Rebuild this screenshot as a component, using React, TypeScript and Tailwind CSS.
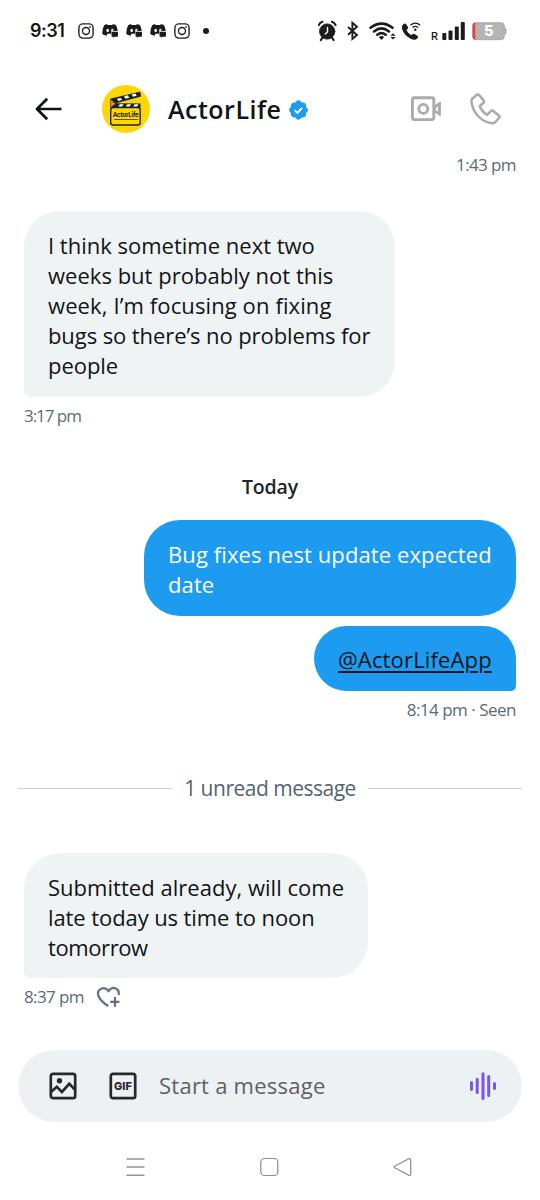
import type { ReactNode } from "react";

function Line({ children, className = "" }: { children: ReactNode; className?: string }) {
  return <span className={`block whitespace-nowrap ${className}`}>{children}</span>;
}

function Instagram() {
  return (
    <svg className="h-4 w-4 shrink-0" viewBox="0 0 16 16" fill="none" stroke="#222" strokeWidth="1.4">
      <rect x="0.9" y="0.9" width="14.2" height="14.2" rx="4" />
      <circle cx="8" cy="8" r="3.5" />
      <circle cx="12" cy="4" r="0.5" fill="#222" strokeWidth="0.8" />
    </svg>
  );
}

function Discord() {
  return (
    <svg className="h-4 w-4 shrink-0" viewBox="0 0 16 16" fill="#1c1c1c">
      <path d="M5 1.2 6 2.1Q8 1.7 10 2.1L11 1.2Q13 1.4 14 2.2 15.5 5 15.7 8H9.2V10.7H5.5L4.6 12.8Q2 12.3.2 11 0 6 2.2 2.2 3.2 1.4 5 1.2Z" />
      <ellipse cx="5.7" cy="7.4" rx="1.3" ry="1.6" fill="#fff" />
      <path d="M9 7.8Q9 5.5 10.5 5.7 12 6 11.6 7.8Z" fill="#fff" />
      <path d="M10.4 8.8h4.7q.9 0 .9.9v3.2q0 .9-.9.9h-2.4l-1.5 1v-1h-.8q-.9 0-.9-.9V9.7q0-.9.9-.9Z" />
    </svg>
  );
}

function StatusBar() {
  return (
    <div className="flex h-[62px] items-center pl-[30px]">
      <span className="w-[36px] whitespace-nowrap font-[Inter] text-[18px] leading-6 font-semibold tracking-[-0.45px] text-[#171717]">9:31</span>
      <div className="ml-3 flex items-center gap-2">
        <Instagram />
        <Discord />
        <Discord />
        <Discord />
        <Instagram />
      </div>
      <span className="ml-[13px] h-[6px] w-[6px] rounded-full bg-[#1c1c1c]" />
      <svg className="ml-auto h-6 w-[190px]" viewBox="0 0 190 24" fill="none">
        <g stroke="#1c1c1c" strokeLinecap="round">
          <circle cx="9.2" cy="12.5" r="7.6" fill="#1c1c1c" />
          <path d="M.8 6.100Q1.800 3.500 4.500 2.700M13.900 2.700Q16.600 3.500 17.600 6.100" strokeWidth="2" />
          <path d="m4.200 19-1.300 2M14.200 19l1.300 2" strokeWidth="2.200" />
          <path d="M9.500 8.500v4.500L7.200 15" stroke="#fff" strokeWidth="1.400" />
          <path d="m30 8 9 8-4.600 4V3.800l4.600 4-9 8" strokeWidth="1.900" strokeLinecap="butt" />
          <path d="M52.500 8.800Q63.500 .4 74.500 8.800M56 12.400Q63.500 6.400 71 12.400M59.300 15.700Q63.500 12.500 67.700 15.700" strokeWidth="2.500" />
        </g>
        <g fill="#1c1c1c">
          <path d="m60.800 18q2.700-1.800 5.400 0L63.500 21ZM75 14.200l2.600 2.600h-5.200ZM72.400 18H77.600L75 20.600Z" />
          <path d="M85.500 5.100Q87 3.800 88.100 5.200l1.900 2.900q.6 1.300-.6 2.100l-1 .9q1.500 3.300 4.900 5.100l1-1q1.100-.9 2.300-.1l3 2q1.100.9 0 2.100-2.600 2.700-6.500.8-7.300-3.500-9.200-10.400-.5-3 1.600-4.500Z" />
          <circle cx="97.300" cy="10.700" r="1.200" />
          <rect x="124.300" y="14" width="4" height="7" rx="1" />
          <rect x="130.500" y="11.500" width="4" height="9.500" rx="1" />
          <rect x="136.800" y="7.500" width="4" height="13.500" rx="1" />
          <rect x="142.800" y="3" width="4" height="18" rx="1" />
        </g>
        <path d="M92.400 6.200Q97.300 2.100 102.200 6.200M94.500 8.500Q97.300 6.200 100.100 8.500" stroke="#1c1c1c" strokeWidth="1.300" />
        <text x="113" y="21" fill="#1c1c1c" fontFamily="Roboto" fontSize="11" fontWeight="500">R</text>
        <path d="M158 3.700h25q3 0 3.300 3v1.600l1.700 1.800v4.400l-1.700 1.700v1.500q-.3 3-3.300 3h-25q-3.200 0-3.200-3.200V6.900q0-3.200 3.200-3.200Z" fill="#b5b5b5" stroke="#9b9b9b" strokeWidth="0.700" />
        <path d="M157.300 3.600v17.200q-2.800-.4-2.800-3.300V6.900q0-2.900 2.800-3.300Z" fill="#df4545" />
        <text x="170.700" y="17.300" textAnchor="middle" fill="#fff" fontFamily="Inter" fontSize="14.500" fontWeight="800">5</text>
      </svg>
      <span className="w-[32px]" />
    </div>
  );
}

function Avatar() {
  return (
    <svg className="h-12 w-12" viewBox="0 0 48 48">
      <circle cx="24" cy="24" r="24" fill="#fcd705" />
      <rect x="8.700" y="22.500" width="29.500" height="17.500" rx="2.500" fill="none" stroke="#25251c" strokeWidth="1.400" />
      <path d="M8.200 13.700 37.200 6.800q1 0 1.200 1l.8 3.600L14 18.300l24.500.1v4.400H8.200Z" fill="#1b252c" />
      <path d="m8.500 14.500 4.900 4.200-4.700 3.600Z" fill="#e88825" />
      <path d="m15 13.800 3.700-.9 1.300 2.200-3.700 1ZM22 11.200l3.800-.9 1.500 2.400-3.600 1ZM29.700 9.400l3.600-.9 1.400 2.300-3.600 1ZM16.300 21.500l1.500-2.200h3.800l-1.500 2.200ZM23.800 21.500l1.500-2.200h3.800l-1.500 2.200ZM31.200 21.500l1.500-2.200h3.800L35 21.500Z" fill="#fff" />
      <text x="23.800" y="31.500" textAnchor="middle" textLength="26" fontFamily="Inter" fontSize="6.300" fontWeight="700" fill="#26241a">ActorLife</text>
      <path d="M12 34.500h24" stroke="#5e5415" strokeWidth="1" />
    </svg>
  );
}

function Header() {
  return (
    <header className="flex h-[94px] items-center pl-[35px] pr-[38px]">
      <svg className="h-7 w-7" viewBox="0 0 28 28" fill="none" stroke="#0f1419" strokeWidth="2.700" strokeLinejoin="round">
        <path d="M26.500 14H2.200M12.200 3.700 2 14l10.200 10.300" />
      </svg>
      <div className="ml-[39px]"><Avatar /></div>
      <h1 className="ml-[18px] w-[114px] whitespace-nowrap text-[25px] leading-8 font-semibold tracking-[0.5px] text-[#0f1419]">ActorLife</h1>
      <svg className="ml-[5px] h-[22px] w-[22px] translate-y-px" viewBox="0 0 22 22" fill="#1d9bf0">
        <path d="M20.900 11c0-1.200-.8-2.400-2-3 .5-1.300.2-2.600-.6-3.600-.9-.9-2.300-1.200-3.600-.8C14.100 2.400 13 1.300 11.500 1.300S8.900 2.400 8.300 3.600C7 3.200 5.700 3.500 4.800 4.400c-.9 1-1.200 2.300-.7 3.600-1.200.6-2 1.800-2 3s.8 2.400 2 3c-.5 1.300-.2 2.600.7 3.600.9.900 2.200 1.200 3.500.8.600 1.200 1.700 2.300 3.200 2.300s2.600-1.100 3.200-2.300c1.300.4 2.600.1 3.600-.8.800-1 1.100-2.300.6-3.600 1.200-.6 2-1.800 2-3Z" />
        <path d="m7.700 11.200 2.700 2.700 4.700-5.100" fill="none" stroke="white" strokeWidth="1.800" />
      </svg>
      <div className="ml-auto flex items-center gap-[28px]">
        <svg className="h-8 w-8" viewBox="0 0 32 32" fill="none" stroke="#ababab" strokeWidth="2.900">
          <rect x="2.400" y="4.800" width="21.400" height="21.800" rx="2" />
          <circle cx="13.300" cy="15.900" r="4.500" />
          <path d="m23.800 13.900 6.400-4.600v13.200l-6.400-4.600Z" fill="#ababab" stroke="#ababab" strokeWidth="1.400" strokeLinejoin="round" />
          <path d="m26 14.800 2-1.300v5l-2-1.300Z" fill="#fff" stroke="none" />
        </svg>
        <svg className="h-8 w-8" viewBox="0 0 32 32" fill="none" stroke="#ababab" strokeWidth="2.600" strokeLinejoin="round">
          <path d="M6.200 2.300Q7.900.8 9.500 2.400l4.200 5.200q.9 1.400-.4 2.500L9.800 13q1.900 5.600 7.300 8.800l3.700-3.700q1.100-1.100 2.500-.2l5.500 4.500q1.300 1.200.2 2.600l-3.600 4q-1.200 1.500-3.500 1.200Q13.800 29.400 7.600 22.500 2.500 16.800 1.500 8.900 1.400 6.700 2.500 5.400Z" />
        </svg>
      </div>
    </header>
  );
}

export default function App() {
  return (
    <div className="flex h-[1200px] w-[540px] flex-col overflow-hidden bg-white font-['Open_Sans',sans-serif] text-[#0f1419]">
      <StatusBar />
      <Header />
      <main className="flex h-[894px] flex-col px-6">
        <time className="h-[20px] self-end whitespace-nowrap text-[17px] leading-[18px] tracking-[-0.6px] text-[#5b6b78]">1:43 pm</time>

        <div className="mt-[35px] h-[186px] w-[371px] rounded-[36px] rounded-bl-[6px] bg-[#eff3f4] px-6 pt-[19px] text-[22px] leading-[30px]">
          <Line>I think sometime next two</Line>
          <Line className="tracking-[0.02px]">weeks but probably not this</Line>
          <Line className="tracking-[0.11px]">week, I’m focusing on fixing</Line>
          <Line className="tracking-[-0.09px]">bugs so there’s no problems for</Line>
          <Line className="tracking-[-0.05px]">people</Line>
        </div>
        <time className="mt-[9px] h-[20px] whitespace-nowrap text-[17px] leading-[19px] tracking-[-1.05px] text-[#5b6b78]">3:17 pm</time>

        <div className="mt-[48px] h-[26px] whitespace-nowrap text-center text-[19.5px] leading-[26px] font-semibold tracking-[-0.15px] text-[#20252a]">Today</div>

        <div className="mt-5 h-24 w-[372px] self-end rounded-[36px] bg-[#1d9bf0] px-6 pt-[19px] text-[22px] leading-[30px] text-white">
          <Line className="tracking-[0.1px]">Bug fixes nest update expected</Line>
          <Line className="tracking-[0.1px]">date</Line>
        </div>
        <div className="mt-[10px] h-[65px] w-[202px] self-end rounded-[36px] rounded-br-[6px] bg-[#1d9bf0] px-6 pt-[18px] text-[22px] leading-[30px]">
          <Line className="tracking-[0.15px] underline decoration-[1.5px] underline-offset-[3px]">@ActorLifeApp</Line>
        </div>
        <div className="mt-[9px] h-5 self-end whitespace-nowrap text-[17px] leading-5 tracking-[-0.5px] text-[#5b6b78]">8:14 pm · Seen</div>

        <div className="-mx-[6px] mt-[53px] flex h-[30px] items-center gap-3">
          <span className="h-px flex-1 bg-[#cbd1d6]" />
          <span className="w-[172px] whitespace-nowrap text-center text-[21px] leading-[30px] tracking-[-0.5px] text-[#536471]">1 unread message</span>
          <span className="h-px flex-1 bg-[#cbd1d6]" />
        </div>

        <div className="mt-[50px] h-[125px] w-[344px] rounded-[36px] rounded-bl-[6px] bg-[#eff3f4] px-6 pt-[19px] text-[22px] leading-[30px]">
          <Line className="tracking-[0.03px]">Submitted already, will come</Line>
          <Line className="tracking-[-0.09px]">late today us time to noon</Line>
          <Line className="tracking-[-0.4px]">tomorrow</Line>
        </div>
        <div className="mt-[7px] flex h-6 items-center">
          <time className="w-[60px] whitespace-nowrap text-[17px] leading-5 tracking-[-0.6px] text-[#5b6b78]">8:37 pm</time>
          <svg className="ml-3 h-6 w-6" viewBox="0 0 24 24" fill="none" stroke="#607282" strokeWidth="2.200">
            <path d="M12.300 21Q4.500 16.300 2.500 11C.2 4.500 8 .2 12.500 6 17-.2 24 3.900 22.600 10M19 12v9.800M14.300 16.800h9.200" />
          </svg>
        </div>
      </main>

      <footer className="mx-[18px] flex h-[72px] shrink-0 items-center rounded-full bg-[#eef1f4] pl-[31px] pr-[25px]">
        <svg className="h-7 w-7" viewBox="0 0 28 28" fill="none" stroke="#24292d" strokeWidth="2.700">
          <rect x="1.800" y="1.800" width="24.400" height="24.400" rx="2.200" />
          <path d="m2 20 5.800-5.200 5.100 5.200 7.400-8.200 6 6.300" />
          <circle cx="10.500" cy="8.700" r="2.700" fill="#24292d" stroke="none" />
        </svg>
        <svg className="ml-8 h-7 w-7" viewBox="0 0 28 28" fill="none">
          <rect x="1.800" y="1.800" width="24.400" height="24.400" rx="2.200" stroke="#24292d" strokeWidth="2.700" />
          <text x="14" y="18" textAnchor="middle" textLength="18" fontFamily="Inter" fontSize="11" fontWeight="800" fill="#24292d">GIF</text>
        </svg>
        <span className="ml-[22px] whitespace-nowrap text-[22px] leading-[30px] tracking-[0.25px] text-[#5c6166] -translate-y-px">Start a message</span>
        <svg className="ml-auto h-7 w-7" viewBox="0 0 28 28" stroke="#7856e7" strokeWidth="3" strokeLinecap="round">
          <path d="M2.500 10.500v7M8.200 7.300v13.200M14 1.800v24.600M19.700 4.500v19M25.500 11.500v5" />
        </svg>
      </footer>

      <nav className="flex h-[78px] shrink-0 items-center pl-[126px] pt-[12px]">
        <svg className="h-5 w-5" viewBox="0 0 20 20" fill="none" stroke="#969696" strokeWidth="1.400">
          <path d="M.5 2h18M.5 10h18M.5 18.300h18" />
        </svg>
        <svg className="ml-[113px] h-5 w-5" viewBox="0 0 20 20" fill="none" stroke="#8d8d8d" strokeWidth="1.200">
          <rect x="1.800" y="1.500" width="17" height="17" rx="3.600" />
        </svg>
        <svg className="ml-[113px] h-5 w-5" viewBox="0 0 20 20" fill="none" stroke="#8d8d8d" strokeWidth="1.200" strokeLinejoin="round">
          <path d="M2.700 9.200 16.800 1.800q1.800-.6 1.900 1v14.400q-.1 1.600-1.900 1L2.700 10.800q-1.300-.8 0-1.600Z" />
        </svg>
      </nav>
    </div>
  );
}
